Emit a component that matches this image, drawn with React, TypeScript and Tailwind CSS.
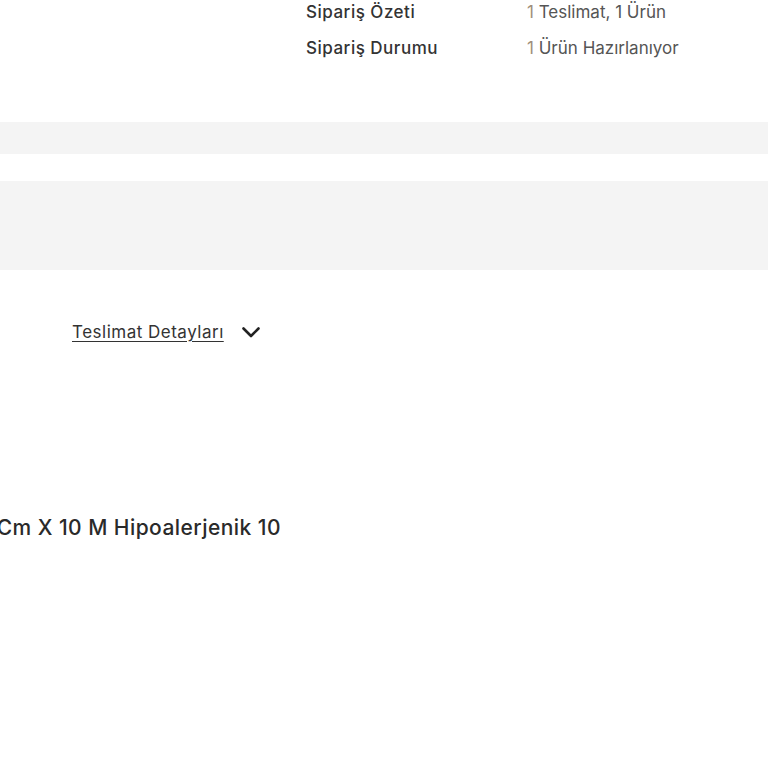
const FONT = { fontFamily: 'Inter, "Noto Sans", sans-serif' };

/** Label/value line in the order summary block. */
function SummaryRow({ label, count, value }: { label: string; count: string; value: string }) {
  return (
    <div className="flex items-center h-[36px]">
      <span className="w-[221px] text-[17px] font-medium text-[#333] tracking-[0.5px]">{label}</span>
      <span className="text-[17px] text-[#555]">
        <span className="text-[#a08e7a]">{count}</span>
        {value}
      </span>
    </div>
  );
}

export default function App() {
  return (
    <div className="w-[768px] h-[768px] bg-white overflow-hidden" style={FONT}>
      <div className="pl-[306px] -mt-[5px]">
        <SummaryRow label="Sipariş Özeti" count="1" value=" Teslimat, 1 Ürün" />
        <SummaryRow label="Sipariş Durumu" count="1" value=" Ürün Hazırlanıyor" />
      </div>

      <div className="mt-[55px] h-[32px] bg-[#f4f4f4]" />
      <div className="mt-[27px] h-[89px] bg-[#f4f4f4]" />

      <div className="mt-[50px] pl-[72px] flex items-center gap-[18px]">
        <span className="text-[17px] text-[#333] underline underline-offset-[3px] tracking-[0.5px]">
          Teslimat Detayları
        </span>
        <svg width="18" height="11" viewBox="0 0 18 11" fill="none" className="text-[#222]">
          <polyline points="1.5,1.5 9,9 16.5,1.5" stroke="currentColor" strokeWidth="2.6" strokeLinecap="round" strokeLinejoin="round" />
        </svg>
      </div>

      <div className="mt-[166px] w-[281px] flex justify-end overflow-hidden">
        <span className="whitespace-nowrap text-[21px] font-medium text-[#2a2a2a] tracking-[0.45px]">
          Flaster 5 Cm X 10 M Hipoalerjenik 10
        </span>
      </div>
    </div>
  );
}
